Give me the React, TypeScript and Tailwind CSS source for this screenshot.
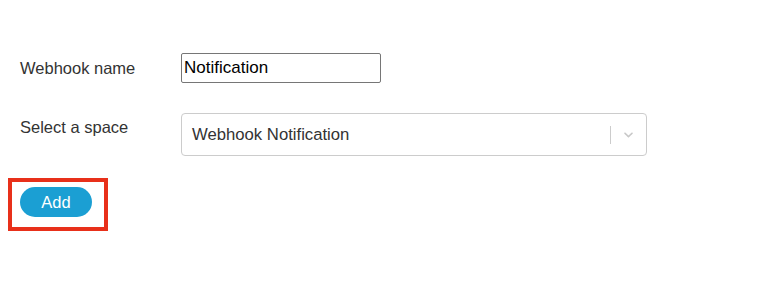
export default function App() {
  return (
    <div className="min-h-screen w-full bg-white font-['Liberation_Sans',Arial,sans-serif] text-[16.5px] text-[#333]">
      <div className="pl-[8px] pt-[53px]">
        {/* Webhook name */}
        <div className="flex items-start pl-[12px]">
          <label className="mt-[5px] w-[161px] leading-[20px]">Webhook name</label>
          <input
            defaultValue="Notification"
            className="h-[30px] w-[200px] rounded-[2px] border border-[#767676] px-[2px] text-[17px] text-black outline-none"
          />
        </div>

        {/* Select a space */}
        <div className="mt-[30px] flex items-start pl-[12px]">
          <label className="mt-[4px] w-[161px] leading-[20px]">Select a space</label>
          <div className="flex h-[43px] w-[466px] items-center rounded-[4px] border border-[#cccccc]">
            <span className="flex-1 pl-[10px] text-[16.7px] text-[#333]">Webhook Notification</span>
            <span className="h-[18px] w-px bg-[#cccccc]" />
            <span className="flex w-[35px] items-center justify-center">
              <svg width="15" height="15" viewBox="0 0 20 20" fill="#c8c8c8">
                <path d="M4.516 7.548c0.436-0.446 1.043-0.481 1.576 0l3.908 3.747 3.908-3.747c0.533-0.481 1.141-0.446 1.574 0 0.436 0.445 0.408 1.197 0 1.615-0.406 0.418-4.695 4.502-4.695 4.502-0.217 0.223-0.502 0.335-0.787 0.335s-0.57-0.112-0.789-0.335c0 0-4.287-4.084-4.695-4.502s-0.436-1.17 0-1.615z" />
              </svg>
            </span>
          </div>
        </div>

        {/* Add */}
        <div className="mt-[22px] inline-block border-4 border-[#e8301a] pb-[10px] pl-[8px] pr-[12px] pt-[5px]">
          <button className="flex h-[30px] w-[72px] items-center justify-center rounded-full bg-[#1b9fd3] text-[16.5px] text-white">
            Add
          </button>
        </div>
      </div>
    </div>
  );
}
